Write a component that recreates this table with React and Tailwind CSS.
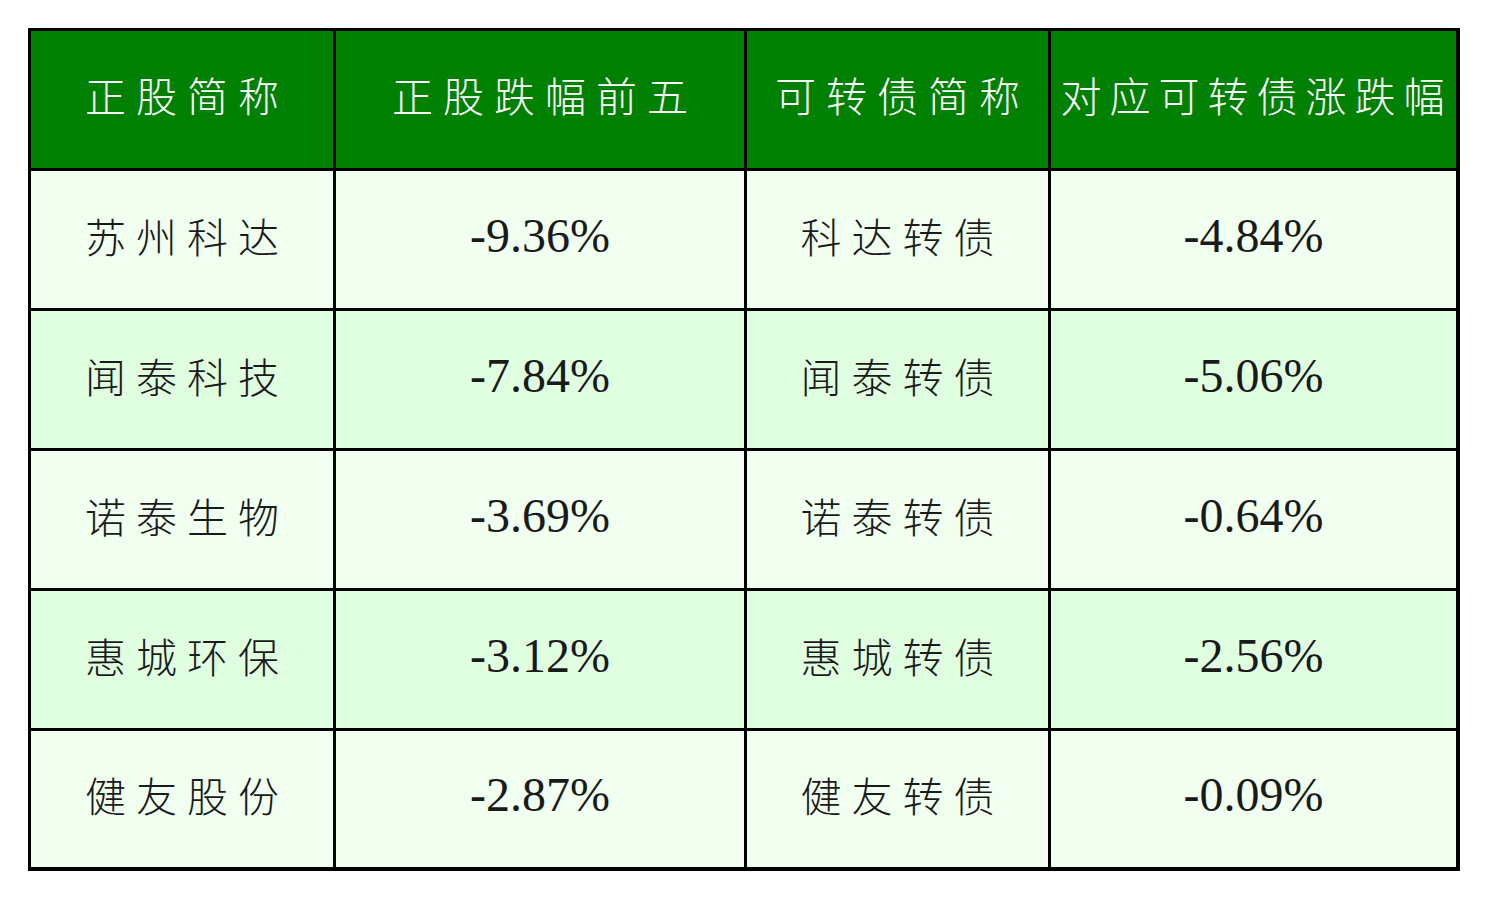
const header = ['正股简称', '正股跌幅前五', '可转债简称', '对应可转债涨跌幅'];

const rows = [
  ['苏州科达', '-9.36%', '科达转债', '-4.84%'],
  ['闻泰科技', '-7.84%', '闻泰转债', '-5.06%'],
  ['诺泰生物', '-3.69%', '诺泰转债', '-0.64%'],
  ['惠城环保', '-3.12%', '惠城转债', '-2.56%'],
  ['健友股份', '-2.87%', '健友转债', '-0.09%'],
];

const cjk = { fontFamily: '"Noto Sans CJK SC", sans-serif' };
const num = { fontFamily: '"Liberation Serif", serif' };

export default function App() {
  return (
    <div className="w-[1488px] h-[899px] bg-white pt-[28px] pl-[28px]">
      <div className="w-[1432px] border-t-[3px] border-l-[3px] border-black grid grid-cols-[305px_411px_304px_409px]">
        {header.map((h, i) => (
          <div
            key={h}
            className={`h-[140px] bg-[#008000] border-b-[3px] border-black flex items-center justify-center whitespace-nowrap pb-[10px] text-white text-[41px] font-light ${i === 3 ? 'border-r-4 tracking-[8px] pl-[6px]' : 'border-r-[3px] tracking-[10px] pl-[10px]'}`}
            style={cjk}
          >
            {h}
          </div>
        ))}
        {rows.map((r, ri) =>
          r.map((c, ci) => (
            <div
              key={ri + '-' + ci}
              className={`h-[140px] border-black flex items-center justify-center pb-[8px] text-[#1a1a1a] ${ri % 2 === 0 ? 'bg-[#f0fff0]' : 'bg-[#e0ffe0]'} ${ri === rows.length - 1 ? 'border-b-4' : 'border-b-[3px]'} ${ci === 3 ? 'border-r-4' : 'border-r-[3px]'} ${ci % 2 === 0 ? 'text-[41px] font-light tracking-[10px] pl-[10px]' : 'text-[48px]'}`}
              style={ci % 2 === 0 ? cjk : num}
            >
              {c}
            </div>
          ))
        )}
      </div>
    </div>
  );
}
